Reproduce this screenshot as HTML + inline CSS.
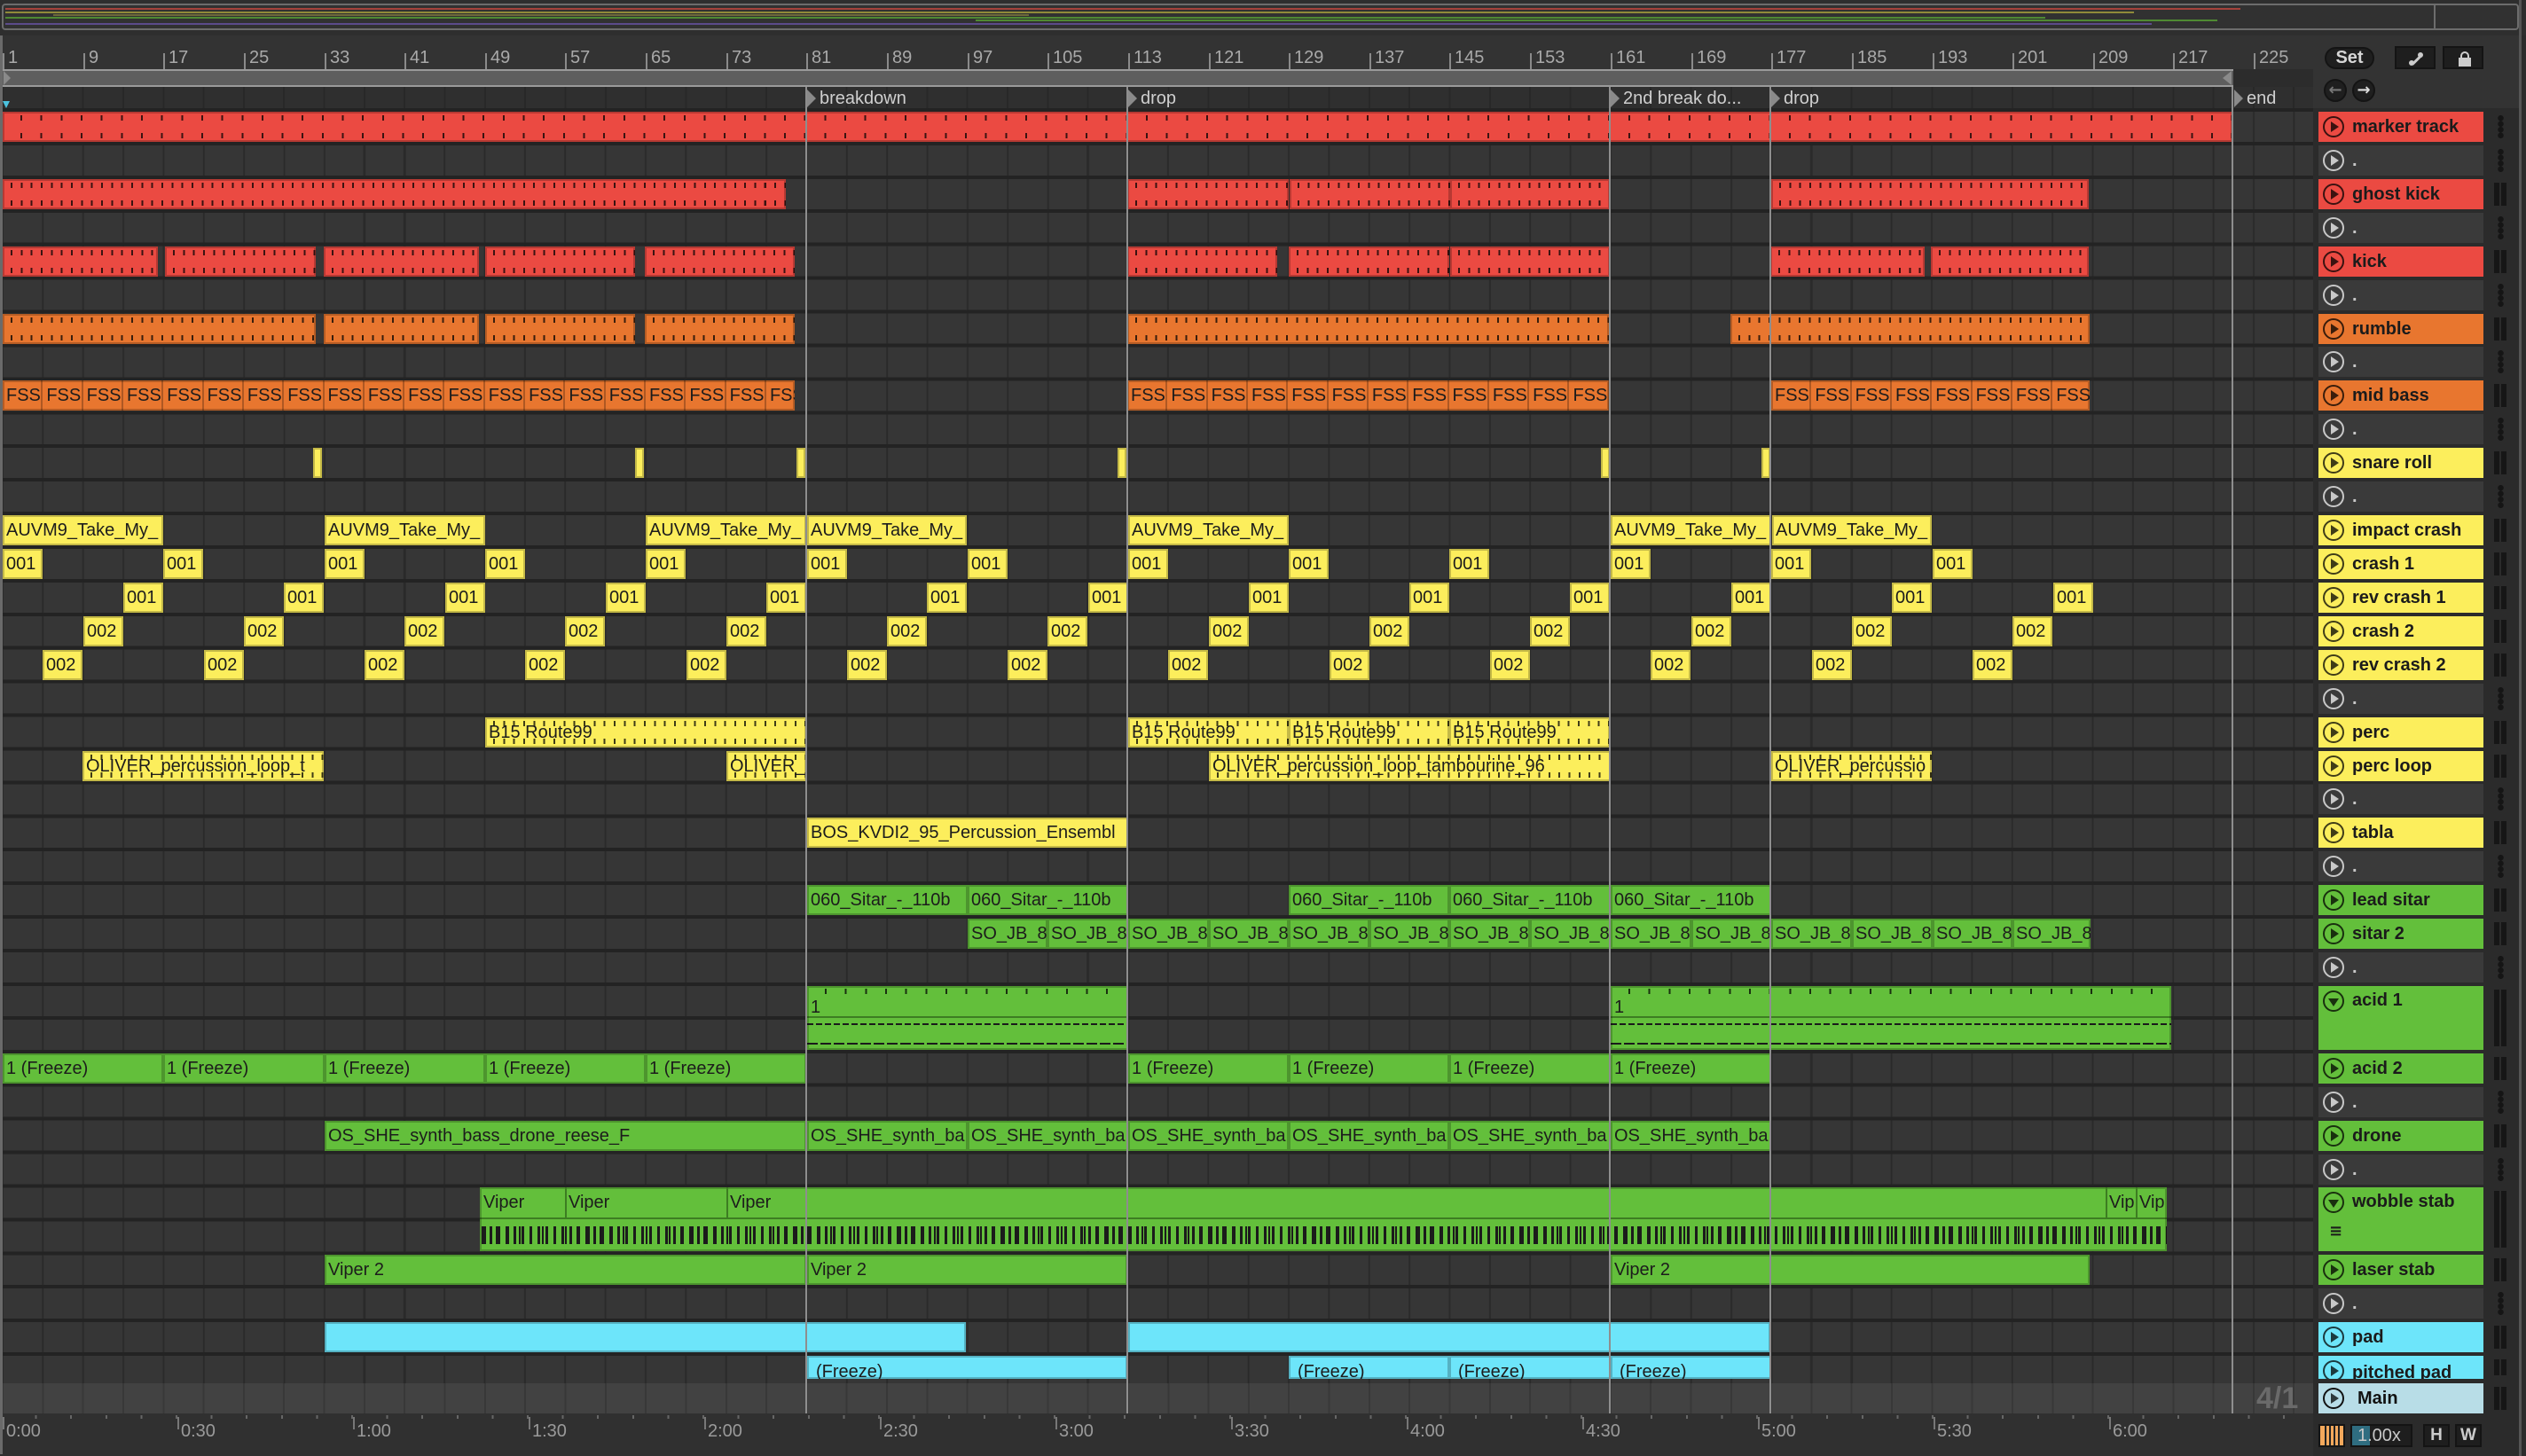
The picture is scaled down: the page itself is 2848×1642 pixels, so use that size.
<!DOCTYPE html>
<html><head><meta charset="utf-8">
<style>
*{margin:0;padding:0}
body{width:2848px;height:1642px;background:#2c2c2c;position:relative;overflow:hidden;font-family:"Liberation Sans",sans-serif}
.a{position:absolute}
.lanes{position:absolute;left:0;top:122px;width:2608px;height:1438px;background-color:#363636;
background-image:repeating-linear-gradient(180deg,#232323 0 4px,transparent 4px 37.92px),repeating-linear-gradient(90deg,#2a2a2a 0 2px,transparent 2px 45.32px);
background-position:0 0,2px 0}
.r{position:absolute;left:0;width:2608px;height:34px}
.c{position:absolute;top:0;height:34px;box-sizing:border-box;overflow:hidden;white-space:nowrap;font:20px/34px "Liberation Sans Narrow","Liberation Sans",sans-serif;color:#1c1c1c;padding-left:4px;box-shadow:inset 0 0 0 2px rgba(0,0,0,.22)}
.R{background-color:#eb4a42}.O{background-color:#e8762f}.Y{background-color:#fcee5c}.G{background-color:#63bf3b}.C{background-color:#6de5fa}
.m{background-image:repeating-linear-gradient(90deg,rgba(0,0,0,.75) 0 2px,transparent 2px 11.33px),repeating-linear-gradient(90deg,rgba(0,0,0,.75) 0 2px,transparent 2px 11.33px);background-size:100% 6px,100% 6px;background-position:9px 4px,9px 24px;background-repeat:no-repeat}
.m2{background-image:repeating-linear-gradient(90deg,rgba(0,0,0,.75) 0 2px,transparent 2px 22.66px),repeating-linear-gradient(90deg,rgba(0,0,0,.75) 0 2px,transparent 2px 22.66px);background-size:100% 6px,100% 6px;background-position:20px 4px,20px 24px;background-repeat:no-repeat}
.f{padding-left:0;font-size:0}
.s{display:inline-block;vertical-align:top;width:45.32px;box-sizing:border-box;border-right:2px solid rgba(0,0,0,.25);padding-left:4px;height:34px;font-size:20px;overflow:hidden}
.w45{width:45px}
.lbl{font:20px "Liberation Sans Narrow","Liberation Sans",sans-serif;color:#a9a9a9;position:absolute;top:54px}
.tk{position:absolute;top:60px;width:2px;height:18px;background:#8a8a8a}
.tl{font:20px "Liberation Sans Narrow","Liberation Sans",sans-serif;color:#9a9a9a;position:absolute;top:1603px}
.tt{position:absolute;top:1598px;width:2px;height:14px;background:#777}
.h{position:absolute;left:2614px;width:186px;height:34px;font:bold 20px/34px "Liberation Sans",sans-serif;color:#1b1b1b;box-sizing:border-box;padding-left:38px;white-space:nowrap}
.h .ic{position:absolute;left:5px;top:5px;width:20px;height:20px;border:2.5px solid rgba(0,0,0,.75);border-radius:50%}
.h .ic:after{content:"";position:absolute;left:7px;top:4px;border-left:9px solid rgba(0,0,0,.75);border-top:6px solid transparent;border-bottom:6px solid transparent}
.h .dn:after{left:4px;top:7px;border-top:9px solid rgba(0,0,0,.75);border-left:6px solid transparent;border-right:6px solid transparent;border-bottom:0}
.d{background:#3a3a3a;color:#c8c8c8}
.d .ic{border-color:#c8c8c8}.d .ic:after{border-left-color:#c8c8c8}
.mt{position:absolute;left:2812px;width:14px;height:34px}
.mt:before,.mt:after{content:"";position:absolute;top:4px;bottom:4px;width:6px;background:#161616}
.mt:before{left:0}.mt:after{right:0}
.md{position:absolute;left:2816px;width:7px;height:26px;background:radial-gradient(circle,#151515 3px,transparent 3.5px) 0 0/7px 6.5px}
.mk{position:absolute;top:100px;font:20px/22px "Liberation Sans Narrow","Liberation Sans",sans-serif;color:#cfcfcf;padding-left:14px;white-space:nowrap}
.mk:before{content:"";position:absolute;left:0;top:1px;border-left:10px solid #8a8a8a;border-top:10px solid transparent;border-bottom:10px solid transparent}
.vl{position:absolute;top:98px;width:2px;height:1496px;background:#8e8e8e}
.btn{position:absolute;background:#1e1e1e;border:2px solid #141414;box-sizing:border-box}
</style></head><body>

<div class="a" style="left:0;top:0;width:2848px;height:40px;background:#2e2e2e"></div>
<div class="a" style="left:2px;top:4px;width:2838px;height:30px;border:2px solid #6c6c6c;border-radius:4px;box-sizing:border-box;background:#313131"></div>
<div class="a" style="left:6px;top:9px;width:2520px;height:2px;background:#a5433c"></div>
<div class="a" style="left:6px;top:13px;width:2400px;height:2px;background:#8f8a3a"></div>
<div class="a" style="left:60px;top:16px;width:1100px;height:2px;background:#6e6a3a"></div>
<div class="a" style="left:6px;top:19px;width:2300px;height:2px;background:#4f8a33"></div>
<div class="a" style="left:1100px;top:22px;width:1400px;height:2px;background:#4f8a33"></div>
<div class="a" style="left:6px;top:26px;width:2420px;height:2px;background:#5b4b8a"></div>
<div class="a" style="left:2744px;top:6px;width:2px;height:26px;background:#6c6c6c"></div>

<div class="a" style="left:0;top:40px;width:2610px;height:38px;background:#333"></div>
<div class="tk" style="left:3px"></div><div class="lbl" style="left:9px">1</div>
<div class="tk" style="left:94px"></div><div class="lbl" style="left:100px">9</div>
<div class="tk" style="left:184px"></div><div class="lbl" style="left:190px">17</div>
<div class="tk" style="left:275px"></div><div class="lbl" style="left:281px">25</div>
<div class="tk" style="left:366px"></div><div class="lbl" style="left:372px">33</div>
<div class="tk" style="left:456px"></div><div class="lbl" style="left:462px">41</div>
<div class="tk" style="left:547px"></div><div class="lbl" style="left:553px">49</div>
<div class="tk" style="left:637px"></div><div class="lbl" style="left:643px">57</div>
<div class="tk" style="left:728px"></div><div class="lbl" style="left:734px">65</div>
<div class="tk" style="left:819px"></div><div class="lbl" style="left:825px">73</div>
<div class="tk" style="left:909px"></div><div class="lbl" style="left:915px">81</div>
<div class="tk" style="left:1000px"></div><div class="lbl" style="left:1006px">89</div>
<div class="tk" style="left:1091px"></div><div class="lbl" style="left:1097px">97</div>
<div class="tk" style="left:1181px"></div><div class="lbl" style="left:1187px">105</div>
<div class="tk" style="left:1272px"></div><div class="lbl" style="left:1278px">113</div>
<div class="tk" style="left:1363px"></div><div class="lbl" style="left:1369px">121</div>
<div class="tk" style="left:1453px"></div><div class="lbl" style="left:1459px">129</div>
<div class="tk" style="left:1544px"></div><div class="lbl" style="left:1550px">137</div>
<div class="tk" style="left:1634px"></div><div class="lbl" style="left:1640px">145</div>
<div class="tk" style="left:1725px"></div><div class="lbl" style="left:1731px">153</div>
<div class="tk" style="left:1816px"></div><div class="lbl" style="left:1822px">161</div>
<div class="tk" style="left:1907px"></div><div class="lbl" style="left:1913px">169</div>
<div class="tk" style="left:1997px"></div><div class="lbl" style="left:2003px">177</div>
<div class="tk" style="left:2088px"></div><div class="lbl" style="left:2094px">185</div>
<div class="tk" style="left:2179px"></div><div class="lbl" style="left:2185px">193</div>
<div class="tk" style="left:2269px"></div><div class="lbl" style="left:2275px">201</div>
<div class="tk" style="left:2360px"></div><div class="lbl" style="left:2366px">209</div>
<div class="tk" style="left:2450px"></div><div class="lbl" style="left:2456px">217</div>
<div class="tk" style="left:2541px"></div><div class="lbl" style="left:2547px">225</div>

<div class="a" style="left:2px;top:78px;width:2516px;height:20px;background:#5e5e5e;border-top:2px solid #9a9a9a;border-bottom:2px solid #9a9a9a;box-sizing:border-box"></div>
<div class="a" style="left:4px;top:80px;border-left:8px solid #8a8a8a;border-top:8px solid transparent;border-bottom:8px solid transparent"></div>
<div class="a" style="left:2506px;top:80px;border-right:10px solid #8a8a8a;border-top:8px solid transparent;border-bottom:8px solid transparent"></div>
<div class="a" style="left:0;top:98px;width:2608px;height:24px;background-color:#2f2f2f;background-image:repeating-linear-gradient(90deg,#282828 0 2px,transparent 2px 45.32px);background-position:2px 0"></div>
<div class="a" style="left:3px;top:114px;border-left:4px solid transparent;border-right:4px solid transparent;border-top:8px solid #4cc3df"></div>

<div class="lanes"></div>
<div class="a" style="left:0;top:1560px;width:2608px;height:34px;background-color:#424242;background-image:repeating-linear-gradient(90deg,#383838 0 2px,transparent 2px 45.32px);background-position:2px 0"></div>
<div class="a" style="left:0;top:1594px;width:2608px;height:48px;background:#303030"></div>

<div class="r" style="top:126px"><div class="c R m2" style="left:3px;width:2514px"></div></div>

<div class="r" style="top:202px">
<div class="c R m" style="left:3px;width:883px"></div>
<div class="c R m" style="left:1271px;width:182px"></div><div class="c R m" style="left:1454px;width:181px"></div><div class="c R m" style="left:1635px;width:180px"></div>
<div class="c R m" style="left:1997px;width:358px"></div></div>

<div class="r" style="top:278px">
<div class="c R m" style="left:3px;width:175px"></div><div class="c R m" style="left:186px;width:170px"></div><div class="c R m" style="left:365px;width:175px"></div><div class="c R m" style="left:547px;width:169px"></div><div class="c R m" style="left:727px;width:169px"></div>
<div class="c R m" style="left:1271px;width:169px"></div><div class="c R m" style="left:1453px;width:181px"></div><div class="c R m" style="left:1635px;width:180px"></div>
<div class="c R m" style="left:1996px;width:174px"></div><div class="c R m" style="left:2177px;width:178px"></div></div>

<div class="r" style="top:354px">
<div class="c O m" style="left:3px;width:353px"></div><div class="c O m" style="left:365px;width:175px"></div><div class="c O m" style="left:547px;width:169px"></div><div class="c O m" style="left:727px;width:169px"></div>
<div class="c O m" style="left:1271px;width:543px"></div>
<div class="c O m" style="left:1951px;width:405px"></div></div>

<div class="r" style="top:429px">
<div class="c O f" style="left:3px;width:893px"><span class="s">FSS</span><span class="s">FSS</span><span class="s">FSS</span><span class="s">FSS</span><span class="s">FSS</span><span class="s">FSS</span><span class="s">FSS</span><span class="s">FSS</span><span class="s">FSS</span><span class="s">FSS</span><span class="s">FSS</span><span class="s">FSS</span><span class="s">FSS</span><span class="s">FSS</span><span class="s">FSS</span><span class="s">FSS</span><span class="s">FSS</span><span class="s">FSS</span><span class="s">FSS</span><span class="s">FSS</span></div>
<div class="c O f" style="left:1271px;width:543px"><span class="s">FSS</span><span class="s">FSS</span><span class="s">FSS</span><span class="s">FSS</span><span class="s">FSS</span><span class="s">FSS</span><span class="s">FSS</span><span class="s">FSS</span><span class="s">FSS</span><span class="s">FSS</span><span class="s">FSS</span><span class="s">FSS</span></div>
<div class="c O f" style="left:1997px;width:359px"><span class="s">FSS</span><span class="s">FSS</span><span class="s">FSS</span><span class="s">FSS</span><span class="s">FSS</span><span class="s">FSS</span><span class="s">FSS</span><span class="s">FSS</span></div></div>

<div class="r" style="top:505px">
<div class="c Y" style="left:353px;width:10px"></div><div class="c Y" style="left:716px;width:10px"></div><div class="c Y" style="left:898px;width:10px"></div><div class="c Y" style="left:1260px;width:10px"></div><div class="c Y" style="left:1805px;width:10px"></div><div class="c Y" style="left:1986px;width:10px"></div></div>

<div class="r" style="top:581px">
<div class="c Y" style="left:3px;width:181px">AUVM9_Take_My_</div><div class="c Y" style="left:366px;width:181px">AUVM9_Take_My_</div><div class="c Y" style="left:728px;width:181px">AUVM9_Take_My_</div><div class="c Y" style="left:910px;width:180px">AUVM9_Take_My_</div><div class="c Y" style="left:1272px;width:181px">AUVM9_Take_My_</div><div class="c Y" style="left:1816px;width:181px">AUVM9_Take_My_</div><div class="c Y" style="left:1998px;width:180px">AUVM9_Take_My_</div></div>

<div class="r" style="top:619px">
<div class="c Y w45" style="left:3px">001</div><div class="c Y w45" style="left:184px">001</div><div class="c Y w45" style="left:366px">001</div><div class="c Y w45" style="left:547px">001</div><div class="c Y w45" style="left:728px">001</div><div class="c Y w45" style="left:910px">001</div><div class="c Y w45" style="left:1091px">001</div><div class="c Y w45" style="left:1272px">001</div><div class="c Y w45" style="left:1453px">001</div><div class="c Y w45" style="left:1634px">001</div><div class="c Y w45" style="left:1816px">001</div><div class="c Y w45" style="left:1997px">001</div><div class="c Y w45" style="left:2179px">001</div></div>

<div class="r" style="top:657px">
<div class="c Y w45" style="left:139px">001</div><div class="c Y w45" style="left:320px">001</div><div class="c Y w45" style="left:502px">001</div><div class="c Y w45" style="left:683px">001</div><div class="c Y w45" style="left:864px">001</div><div class="c Y w45" style="left:1045px">001</div><div class="c Y w45" style="left:1227px">001</div><div class="c Y w45" style="left:1408px">001</div><div class="c Y w45" style="left:1589px">001</div><div class="c Y w45" style="left:1770px">001</div><div class="c Y w45" style="left:1952px">001</div><div class="c Y w45" style="left:2133px">001</div><div class="c Y w45" style="left:2315px">001</div></div>

<div class="r" style="top:695px">
<div class="c Y w45" style="left:94px">002</div><div class="c Y w45" style="left:275px">002</div><div class="c Y w45" style="left:456px">002</div><div class="c Y w45" style="left:637px">002</div><div class="c Y w45" style="left:819px">002</div><div class="c Y w45" style="left:1000px">002</div><div class="c Y w45" style="left:1181px">002</div><div class="c Y w45" style="left:1363px">002</div><div class="c Y w45" style="left:1544px">002</div><div class="c Y w45" style="left:1725px">002</div><div class="c Y w45" style="left:1907px">002</div><div class="c Y w45" style="left:2088px">002</div><div class="c Y w45" style="left:2269px">002</div></div>

<div class="r" style="top:733px">
<div class="c Y w45" style="left:48px">002</div><div class="c Y w45" style="left:230px">002</div><div class="c Y w45" style="left:411px">002</div><div class="c Y w45" style="left:592px">002</div><div class="c Y w45" style="left:774px">002</div><div class="c Y w45" style="left:955px">002</div><div class="c Y w45" style="left:1136px">002</div><div class="c Y w45" style="left:1317px">002</div><div class="c Y w45" style="left:1499px">002</div><div class="c Y w45" style="left:1680px">002</div><div class="c Y w45" style="left:1861px">002</div><div class="c Y w45" style="left:2043px">002</div><div class="c Y w45" style="left:2224px">002</div></div>

<div class="r" style="top:809px">
<div class="c Y m" style="left:547px;width:362px">B15 Route99</div>
<div class="c Y m" style="left:1272px;width:181px">B15 Route99</div><div class="c Y m" style="left:1453px;width:181px">B15 Route99</div><div class="c Y m" style="left:1634px;width:181px">B15 Route99</div></div>

<div class="r" style="top:847px">
<div class="c Y m" style="left:93px;width:272px">OLIVER_percussion_loop_t</div><div class="c Y m" style="left:819px;width:90px">OLIVER_</div>
<div class="c Y m" style="left:1363px;width:453px">OLIVER_percussion_loop_tambourine_96</div><div class="c Y m" style="left:1997px;width:181px">OLIVER_percussio</div></div>

<div class="r" style="top:922px"><div class="c Y" style="left:910px;width:362px">BOS_KVDI2_95_Percussion_Ensembl</div></div>

<div class="r" style="top:998px">
<div class="c G" style="left:910px;width:181px">060_Sitar_-_110b</div><div class="c G" style="left:1091px;width:181px">060_Sitar_-_110b</div>
<div class="c G" style="left:1453px;width:181px">060_Sitar_-_110b</div><div class="c G" style="left:1634px;width:182px">060_Sitar_-_110b</div><div class="c G" style="left:1816px;width:181px">060_Sitar_-_110b</div></div>

<div class="r" style="top:1036px">
<div class="c G" style="left:1091px;width:90px">SO_JB_8</div><div class="c G" style="left:1181px;width:91px">SO_JB_8</div><div class="c G" style="left:1272px;width:91px">SO_JB_8</div><div class="c G" style="left:1363px;width:90px">SO_JB_8</div><div class="c G" style="left:1453px;width:91px">SO_JB_8</div><div class="c G" style="left:1544px;width:90px">SO_JB_8</div><div class="c G" style="left:1634px;width:91px">SO_JB_8</div><div class="c G" style="left:1725px;width:91px">SO_JB_8</div><div class="c G" style="left:1816px;width:91px">SO_JB_8</div><div class="c G" style="left:1907px;width:90px">SO_JB_8</div><div class="c G" style="left:1997px;width:91px">SO_JB_8</div><div class="c G" style="left:2088px;width:91px">SO_JB_8</div><div class="c G" style="left:2179px;width:90px">SO_JB_8</div><div class="c G" style="left:2269px;width:88px">SO_JB_8</div></div>

<div class="r" style="top:1112px;height:72px">
<div class="c G" style="left:910px;width:362px;height:72px;line-height:40px;padding-top:4px;background-image:repeating-linear-gradient(90deg,rgba(0,0,0,.75) 0 2px,transparent 2px 22.66px),linear-gradient(#3d7d22,#3d7d22),repeating-linear-gradient(90deg,#1a1a1a 0 7px,transparent 7px 10px),repeating-linear-gradient(90deg,#1a1a1a 0 12px,transparent 12px 15px);background-size:100% 6px,100% 2px,100% 2px,100% 2px;background-position:20px 3px,0 34px,0 42px,0 64px;background-repeat:no-repeat">1</div>
<div class="c G" style="left:1816px;width:632px;height:72px;line-height:40px;padding-top:4px;background-image:repeating-linear-gradient(90deg,rgba(0,0,0,.75) 0 2px,transparent 2px 22.66px),linear-gradient(#3d7d22,#3d7d22),repeating-linear-gradient(90deg,#1a1a1a 0 7px,transparent 7px 10px),repeating-linear-gradient(90deg,#1a1a1a 0 12px,transparent 12px 15px);background-size:100% 6px,100% 2px,100% 2px,100% 2px;background-position:20px 3px,0 34px,0 42px,0 64px;background-repeat:no-repeat">1</div></div>

<div class="r" style="top:1188px">
<div class="c G" style="left:3px;width:181px">1 (Freeze)</div><div class="c G" style="left:184px;width:182px">1 (Freeze)</div><div class="c G" style="left:366px;width:181px">1 (Freeze)</div><div class="c G" style="left:547px;width:181px">1 (Freeze)</div><div class="c G" style="left:728px;width:181px">1 (Freeze)</div>
<div class="c G" style="left:1272px;width:181px">1 (Freeze)</div><div class="c G" style="left:1453px;width:181px">1 (Freeze)</div><div class="c G" style="left:1634px;width:182px">1 (Freeze)</div><div class="c G" style="left:1816px;width:181px">1 (Freeze)</div></div>

<div class="r" style="top:1264px">
<div class="c G" style="left:366px;width:543px">OS_SHE_synth_bass_drone_reese_F</div>
<div class="c G" style="left:910px;width:181px">OS_SHE_synth_ba</div><div class="c G" style="left:1091px;width:181px">OS_SHE_synth_ba</div><div class="c G" style="left:1272px;width:181px">OS_SHE_synth_ba</div><div class="c G" style="left:1453px;width:181px">OS_SHE_synth_ba</div><div class="c G" style="left:1634px;width:182px">OS_SHE_synth_ba</div><div class="c G" style="left:1816px;width:181px">OS_SHE_synth_ba</div></div>

<div class="r" style="top:1339px;height:72px">
<div class="c G" style="left:541px;width:1902px;height:72px;padding:0;background-image:linear-gradient(#3d7d22,#3d7d22),repeating-linear-gradient(90deg,#1b1b1b 0 3px,transparent 3px 9px),repeating-linear-gradient(90deg,#1b1b1b 0 2px,transparent 2px 13px);background-size:100% 2px,100% 20px,100% 20px;background-position:0 34px,2px 44px,5px 44px;background-repeat:no-repeat">
<div class="a" style="left:4px;top:0;line-height:34px">Viper</div>
<div class="a" style="left:96px;top:0;width:2px;height:34px;background:#3d7d22"></div><div class="a" style="left:100px;top:0;line-height:34px">Viper</div>
<div class="a" style="left:278px;top:0;width:2px;height:34px;background:#3d7d22"></div><div class="a" style="left:282px;top:0;line-height:34px">Viper</div>
<div class="a" style="left:1833px;top:0;width:2px;height:34px;background:#3d7d22"></div><div class="a" style="left:1837px;top:0;line-height:34px">Vip</div>
<div class="a" style="left:1867px;top:0;width:2px;height:34px;background:#3d7d22"></div><div class="a" style="left:1871px;top:0;line-height:34px">Vip</div>
</div></div>

<div class="r" style="top:1415px">
<div class="c G" style="left:366px;width:543px">Viper 2</div><div class="c G" style="left:910px;width:361px">Viper 2</div><div class="c G" style="left:1816px;width:540px">Viper 2</div></div>

<div class="r" style="top:1491px">
<div class="c C" style="left:366px;width:723px"></div><div class="c C" style="left:1272px;width:724px"></div></div>

<div class="r" style="top:1529px;height:26px">
<div class="c C" style="left:910px;width:361px;height:26px;line-height:36px;padding-left:10px">(Freeze)</div>
<div class="c C" style="left:1453px;width:181px;height:26px;line-height:36px;padding-left:10px">(Freeze)</div><div class="c C" style="left:1634px;width:182px;height:26px;line-height:36px;padding-left:10px">(Freeze)</div><div class="c C" style="left:1816px;width:181px;height:26px;line-height:36px;padding-left:10px">(Freeze)</div></div>

<div class="vl" style="left:908px"></div><div class="vl" style="left:1270px"></div><div class="vl" style="left:1814px"></div><div class="vl" style="left:1995px"></div><div class="vl" style="left:2516px"></div>
<div class="mk" style="left:910px">breakdown</div>
<div class="mk" style="left:1272px">drop</div>
<div class="mk" style="left:1816px">2nd break do...</div>
<div class="mk" style="left:1997px">drop</div>
<div class="mk" style="left:2519px">end</div>

<div class="tt" style="left:3px"></div><div class="tl" style="left:7px">0:00</div>
<div class="tt" style="left:200px"></div><div class="tl" style="left:204px">0:30</div>
<div class="tt" style="left:398px"></div><div class="tl" style="left:402px">1:00</div>
<div class="tt" style="left:596px"></div><div class="tl" style="left:600px">1:30</div>
<div class="tt" style="left:794px"></div><div class="tl" style="left:798px">2:00</div>
<div class="tt" style="left:992px"></div><div class="tl" style="left:996px">2:30</div>
<div class="tt" style="left:1190px"></div><div class="tl" style="left:1194px">3:00</div>
<div class="tt" style="left:1388px"></div><div class="tl" style="left:1392px">3:30</div>
<div class="tt" style="left:1586px"></div><div class="tl" style="left:1590px">4:00</div>
<div class="tt" style="left:1784px"></div><div class="tl" style="left:1788px">4:30</div>
<div class="tt" style="left:1982px"></div><div class="tl" style="left:1986px">5:00</div>
<div class="tt" style="left:2180px"></div><div class="tl" style="left:2184px">5:30</div>
<div class="tt" style="left:2378px"></div><div class="tl" style="left:2382px">6:00</div>
<div class="a" style="left:0;top:1596px;width:2608px;height:4px;background:repeating-linear-gradient(90deg,#666 0 2px,transparent 2px 39.6px)"></div>
<div class="a" style="left:2544px;top:1562px;font:bold 34px/30px 'Liberation Sans',sans-serif;color:#6a6a6a">4/1</div>

<div class="a" style="left:2608px;top:40px;width:240px;height:1602px;background:#2b2b2b"></div>
<div class="a" style="left:2608px;top:40px;width:232px;height:82px;background:#333"></div>
<div class="a" style="left:2621px;top:53px;width:56px;height:25px;border-radius:13px;background:#1f1f1f;border:2px solid #141414;box-sizing:border-box;font:bold 20px/21px 'Liberation Sans',sans-serif;color:#d6d6d6;text-align:center">Set</div>
<div class="btn" style="left:2700px;top:52px;width:46px;height:26px"><div class="a" style="left:16px;top:12px;width:14px;height:3px;background:#ccc;transform:rotate(-45deg)"></div><div class="a" style="left:14px;top:14px;width:6px;height:6px;border-radius:50%;background:#ccc"></div><div class="a" style="left:24px;top:5px;width:6px;height:6px;border-radius:50%;background:#ccc"></div></div>
<div class="btn" style="left:2754px;top:52px;width:46px;height:26px"><div class="a" style="left:16px;top:11px;width:14px;height:10px;background:#ccc"></div><div class="a" style="left:18px;top:4px;width:6px;height:8px;border:2px solid #ccc;border-bottom:0;border-radius:5px 5px 0 0"></div></div>
<div class="a" style="left:2620px;top:89px;width:26px;height:26px;border-radius:50%;background:#1f1f1f;border:2px solid #141414;box-sizing:border-box;color:#777;font:bold 18px/22px 'DejaVu Sans',sans-serif;text-align:center">←</div>
<div class="a" style="left:2652px;top:89px;width:26px;height:26px;border-radius:50%;background:#1f1f1f;border:2px solid #141414;box-sizing:border-box;color:#ddd;font:bold 18px/22px 'DejaVu Sans',sans-serif;text-align:center">→</div>

<div class="h R" style="top:126px"><span class="ic"></span>marker track</div><div class="md" style="top:130px"></div>
<div class="h d" style="top:164px"><span class="ic"></span>.</div><div class="md" style="top:168px"></div>
<div class="h R" style="top:202px"><span class="ic"></span>ghost kick</div><div class="mt" style="top:202px"></div>
<div class="h d" style="top:240px"><span class="ic"></span>.</div><div class="md" style="top:244px"></div>
<div class="h R" style="top:278px"><span class="ic"></span>kick</div><div class="mt" style="top:278px"></div>
<div class="h d" style="top:316px"><span class="ic"></span>.</div><div class="md" style="top:320px"></div>
<div class="h O" style="top:354px"><span class="ic"></span>rumble</div><div class="mt" style="top:354px"></div>
<div class="h d" style="top:391px"><span class="ic"></span>.</div><div class="md" style="top:395px"></div>
<div class="h O" style="top:429px"><span class="ic"></span>mid bass</div><div class="mt" style="top:429px"></div>
<div class="h d" style="top:467px"><span class="ic"></span>.</div><div class="md" style="top:471px"></div>
<div class="h Y" style="top:505px"><span class="ic"></span>snare roll</div><div class="mt" style="top:505px"></div>
<div class="h d" style="top:543px"><span class="ic"></span>.</div><div class="md" style="top:547px"></div>
<div class="h Y" style="top:581px"><span class="ic"></span>impact crash</div><div class="mt" style="top:581px"></div>
<div class="h Y" style="top:619px"><span class="ic"></span>crash 1</div><div class="mt" style="top:619px"></div>
<div class="h Y" style="top:657px"><span class="ic"></span>rev crash 1</div><div class="mt" style="top:657px"></div>
<div class="h Y" style="top:695px"><span class="ic"></span>crash 2</div><div class="mt" style="top:695px"></div>
<div class="h Y" style="top:733px"><span class="ic"></span>rev crash 2</div><div class="mt" style="top:733px"></div>
<div class="h d" style="top:771px"><span class="ic"></span>.</div><div class="md" style="top:775px"></div>
<div class="h Y" style="top:809px"><span class="ic"></span>perc</div><div class="mt" style="top:809px"></div>
<div class="h Y" style="top:847px"><span class="ic"></span>perc loop</div><div class="mt" style="top:847px"></div>
<div class="h d" style="top:884px"><span class="ic"></span>.</div><div class="md" style="top:888px"></div>
<div class="h Y" style="top:922px"><span class="ic"></span>tabla</div><div class="mt" style="top:922px"></div>
<div class="h d" style="top:960px"><span class="ic"></span>.</div><div class="md" style="top:964px"></div>
<div class="h G" style="top:998px"><span class="ic"></span>lead sitar</div><div class="mt" style="top:998px"></div>
<div class="h G" style="top:1036px"><span class="ic"></span>sitar 2</div><div class="mt" style="top:1036px"></div>
<div class="h d" style="top:1074px"><span class="ic"></span>.</div><div class="md" style="top:1078px"></div>
<div class="h G" style="top:1112px;height:72px;line-height:32px"><span class="ic dn"></span>acid 1</div><div class="mt" style="top:1112px;height:72px"></div>
<div class="h G" style="top:1188px"><span class="ic"></span>acid 2</div><div class="mt" style="top:1188px"></div>
<div class="h d" style="top:1226px"><span class="ic"></span>.</div><div class="md" style="top:1230px"></div>
<div class="h G" style="top:1264px"><span class="ic"></span>drone</div><div class="mt" style="top:1264px"></div>
<div class="h d" style="top:1302px"><span class="ic"></span>.</div><div class="md" style="top:1306px"></div>
<div class="h G" style="top:1339px;height:72px;line-height:32px"><span class="ic dn"></span>wobble stab<div class="a" style="left:12px;top:38px;font:bold 18px/24px 'DejaVu Sans',sans-serif">≡</div></div><div class="mt" style="top:1339px;height:72px"></div>
<div class="h G" style="top:1415px"><span class="ic"></span>laser stab</div><div class="mt" style="top:1415px"></div>
<div class="h d" style="top:1453px"><span class="ic"></span>.</div><div class="md" style="top:1457px"></div>
<div class="h C" style="top:1491px"><span class="ic"></span>pad</div><div class="mt" style="top:1491px"></div>
<div class="h C" style="top:1529px;height:26px;overflow:hidden;line-height:38px"><span class="ic"></span>pitched pad</div><div class="mt" style="top:1529px;height:26px"></div>
<div class="h" style="top:1560px;background:#b8dde7;color:#111;padding-left:44px"><span class="ic" style="border-color:#111"></span>Main</div><div class="mt" style="top:1560px"></div>

<div class="a" style="left:2614px;top:1606px;width:30px;height:26px;background:#f3a85c;border:2px solid #141414;box-sizing:border-box;background-image:linear-gradient(90deg,transparent 5px,#222 5px 7px,transparent 7px 10px,#222 10px 12px,transparent 12px 15px,#222 15px 17px,transparent 17px 20px,#222 20px 22px,transparent 22px)"></div>
<div class="a" style="left:2650px;top:1606px;width:70px;height:26px;background:#1e1e1e;border:2px solid #141414;box-sizing:border-box"><div class="a" style="left:0;top:0;width:20px;height:22px;background:#2f6d80"></div><div class="a" style="left:6px;top:0;font:20px/22px 'Liberation Sans',sans-serif;color:#c8c8c8">1.00x</div></div>
<div class="a" style="left:2732px;top:1606px;width:30px;height:26px;background:#1e1e1e;border:2px solid #141414;box-sizing:border-box;font:bold 19px/22px 'Liberation Sans',sans-serif;color:#ccc;text-align:center">H</div>
<div class="a" style="left:2768px;top:1606px;width:30px;height:26px;background:#1e1e1e;border:2px solid #141414;box-sizing:border-box;font:bold 19px/22px 'Liberation Sans',sans-serif;color:#ccc;text-align:center">W</div>
<div class="a" style="left:2840px;top:0;width:3px;height:1642px;background:#555"></div>
<div class="a" style="left:0;top:40px;width:3px;height:1600px;background:#6a6a6a"></div>
</body></html>
